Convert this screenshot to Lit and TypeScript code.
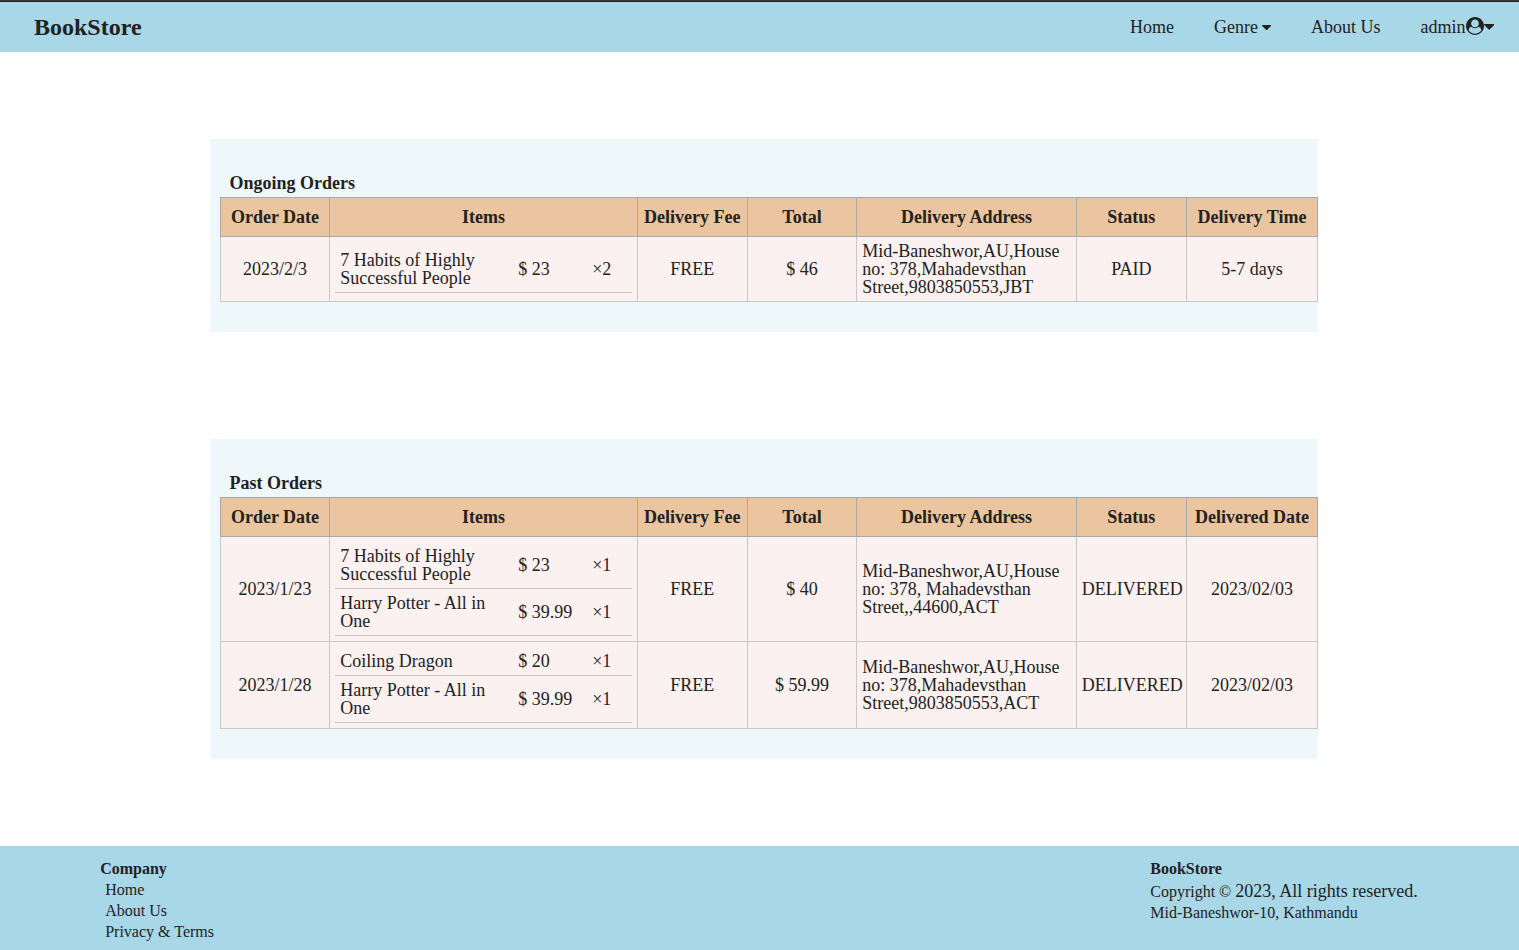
import { LitElement, html, css, svg } from "lit";
import { customElement, property } from "lit/decorators.js";

interface Item {
  title: string;
  price: string;
  qty: number;
}

interface Order {
  date: string;
  items: Item[];
  fee: string;
  total: string;
  address: string;
  status: string;
  delivery: string;
}

const ongoing: Order[] = [
  {
    date: "2023/2/3",
    items: [{ title: "7 Habits of Highly Successful People", price: "$ 23", qty: 2 }],
    fee: "FREE",
    total: "$ 46",
    address: "Mid-Baneshwor,AU,House no: 378,Mahadevsthan Street,9803850553,JBT",
    status: "PAID",
    delivery: "5-7 days",
  },
];

const past: Order[] = [
  {
    date: "2023/1/23",
    items: [
      { title: "7 Habits of Highly Successful People", price: "$ 23", qty: 1 },
      { title: "Harry Potter - All in One", price: "$ 39.99", qty: 1 },
    ],
    fee: "FREE",
    total: "$ 40",
    address: "Mid-Baneshwor,AU,House no: 378, Mahadevsthan Street,,44600,ACT",
    status: "DELIVERED",
    delivery: "2023/02/03",
  },
  {
    date: "2023/1/28",
    items: [
      { title: "Coiling Dragon", price: "$ 20", qty: 1 },
      { title: "Harry Potter - All in One", price: "$ 39.99", qty: 1 },
    ],
    fee: "FREE",
    total: "$ 59.99",
    address: "Mid-Baneshwor,AU,House no: 378,Mahadevsthan Street,9803850553,ACT",
    status: "DELIVERED",
    delivery: "2023/02/03",
  },
];

const caretPath = svg`<path d="M1024 64q0 26-19 45l-448 448q-19 19-45 19t-45-19l-448-448q-19-19-19-45t19-45 45-19h896q26 0 45 19t19 45z"/>`;

const userPath = svg`<path d="M1523 1339q-22-155-87.5-257.5t-184.5-118.5q-67 74-159.5 115.5t-195.5 41.5-195.5-41.5-159.5-115.5q-119 16-184.5 118.5t-87.5 257.5q106 150 271 237.5t356 87.5 356-87.5 271-237.5zm-243-699q0-159-112.5-271.5t-271.5-112.5-271.5 112.5-112.5 271.5 112.5 271.5 271.5 112.5 271.5-112.5 112.5-271.5zm512 256q0 182-71 347.5t-190.5 286-285.5 191.5-349 71q-182 0-348-71t-286-191-191-286-71-348 71-348 191-286 286-191 348-71 348 71 286 191 191 286 71 348z"/>`;

@customElement("orders-section")
export class OrdersSection extends LitElement {
  @property() heading = "";
  @property() lastColumn = "";
  @property({ attribute: false }) orders: Order[] = [];

  static styles = css`
    :host {
      display: block;
      box-sizing: border-box;
      width: 1108px;
      padding: 35px 0 30px 10px;
      background: #eef7fa;
    }
    .heading {
      margin: 0 0 5px 9.6px;
      font-size: 18px;
      line-height: 18px;
      font-weight: bold;
    }
    .row {
      display: grid;
      grid-template-columns: 109px 308px 110px 109px 220px 110px 131px;
      border-left: 1px solid #c8c8c8;
      background: #fbf1f0;
    }
    .head {
      border-left-color: #a9a9a9;
      border-top: 1px solid #a9a9a9;
      background: #ebc5a0;
      font-weight: bold;
      height: 39px;
    }
    .cell {
      display: flex;
      align-items: center;
      justify-content: center;
      padding: 5px;
      border-right: 1px solid #c8c8c8;
      border-bottom: 1px solid #c8c8c8;
      white-space: nowrap;
    }
    .head .cell {
      border-color: #a9a9a9;
    }
    .fee {
      padding: 5px 5.2px 5px 4.8px;
    }
    .status {
      padding: 5px 5.2px 5px 4.8px;
    }
    .wide {
      justify-content: flex-start;
      padding: 5px 3px 5px 4.8px;
    }
    .address {
      justify-content: flex-start;
      padding-left: 5.2px;
      white-space: normal;
    }
    .items {
      flex-direction: column;
      align-items: stretch;
      white-space: normal;
    }
    .item {
      display: grid;
      grid-template-columns: 60% 24.92% 15.08%;
      align-items: center;
      border-bottom: 1px solid #c8c8c8;
    }
    .item span {
      padding: 5px;
    }
    .item .book {
      padding-left: 5.2px;
    }
  `;

  render() {
    const columns = [
      ["Order Date", ""],
      ["Items", ""],
      ["Delivery Fee", "fee"],
      ["Total", ""],
      ["Delivery Address", ""],
      ["Status", "status"],
      [this.lastColumn, ""],
    ];
    return html`
      <h2 class="heading">${this.heading}</h2>
      <div class="row head">${columns.map(([label, cls]) => html`<div class="cell ${cls}">${label}</div>`)}</div>
      ${this.orders.map(
        (o) => html`<div class="row">
          <div class="cell">${o.date}</div>
          <div class="cell items">
            ${o.items.map(
              (i) => html`<div class="item"><span class="book">${i.title}</span><span>${i.price}</span><span>×${i.qty}</span></div>`
            )}
          </div>
          <div class="cell fee">${o.fee}</div>
          <div class="cell">${o.total}</div>
          <div class="cell address">${o.address}</div>
          <div class="cell ${o.status.length > 8 ? "wide" : "status"}">${o.status}</div>
          <div class="cell">${o.delivery}</div>
        </div>`
      )}
    `;
  }
}

@customElement("app-root")
export class AppRoot extends LitElement {
  static styles = css`
    :host {
      display: flex;
      flex-direction: column;
      height: 950px;
      overflow: hidden;
      background: #fff;
      color: #222;
      font-family: "Liberation Serif", "Times New Roman", serif;
      font-size: 18px;
      line-height: 18px;
    }
    .nav {
      box-sizing: border-box;
      height: 52px;
      flex: none;
      display: flex;
      align-items: center;
      justify-content: space-between;
      padding: 0 25.2px 0 34px;
      border-top: 1px solid #3a3a3a;
      background: #a8d7e7;
      box-shadow: inset 0 1px #222226;
    }
    .brand {
      font-size: 24px;
      line-height: 24px;
      font-weight: bold;
      padding-top: 1px;
    }
    .links {
      display: flex;
      gap: 40px;
      padding-top: 1px;
    }
    .link {
      display: flex;
      align-items: center;
    }
    svg {
      display: block;
      fill: #222;
    }
    .caret-small {
      width: 9.2px;
      height: 5.2px;
      margin: 1px 0 0 3.8px;
    }
    .caret {
      width: 10.3px;
      height: 5.8px;
    }
    .user {
      width: 18px;
      height: 18px;
      margin-top: -1.4px;
    }
    .main {
      flex: 1;
      display: flex;
      flex-direction: column;
      gap: 107px;
      padding: 87px 0 0 210px;
    }
    .footer {
      box-sizing: border-box;
      flex: none;
      height: 104px;
      display: flex;
      justify-content: space-between;
      padding: 12px 100.8px 0 100.2px;
      background: #a8d7e7;
      font-size: 16px;
      line-height: 21px;
    }
    .title {
      font-weight: bold;
    }
    .sub {
      padding-left: 5px;
    }
    .legal {
      width: 268px;
      white-space: nowrap;
    }
    .copy {
      height: 23px;
      line-height: 25px;
    }
    .large {
      font-size: 18px;
    }
  `;

  render() {
    return html`
      <header class="nav">
        <div class="brand">BookStore</div>
        <nav class="links">
          <div class="link">Home</div>
          <div class="link">Genre<svg class="caret-small" viewBox="0 0 1024 576">${caretPath}</svg></div>
          <div class="link">About Us</div>
          <div class="link">
            admin<svg class="user" viewBox="0 0 1792 1792">${userPath}</svg
            ><svg class="caret" viewBox="0 0 1024 576">${caretPath}</svg>
          </div>
        </nav>
      </header>
      <main class="main">
        <orders-section .heading=${"Ongoing Orders"} .lastColumn=${"Delivery Time"} .orders=${ongoing}></orders-section>
        <orders-section .heading=${"Past Orders"} .lastColumn=${"Delivered Date"} .orders=${past}></orders-section>
      </main>
      <footer class="footer">
        <div>
          <div class="title">Company</div>
          <div class="sub">Home</div>
          <div class="sub">About Us</div>
          <div class="sub">Privacy &amp; Terms</div>
        </div>
        <div class="legal">
          <div class="title">BookStore</div>
          <div class="copy">Copyright © <span class="large">2023, All rights reserved.</span></div>
          <div>Mid-Baneshwor-10, Kathmandu</div>
        </div>
      </footer>
    `;
  }
}
